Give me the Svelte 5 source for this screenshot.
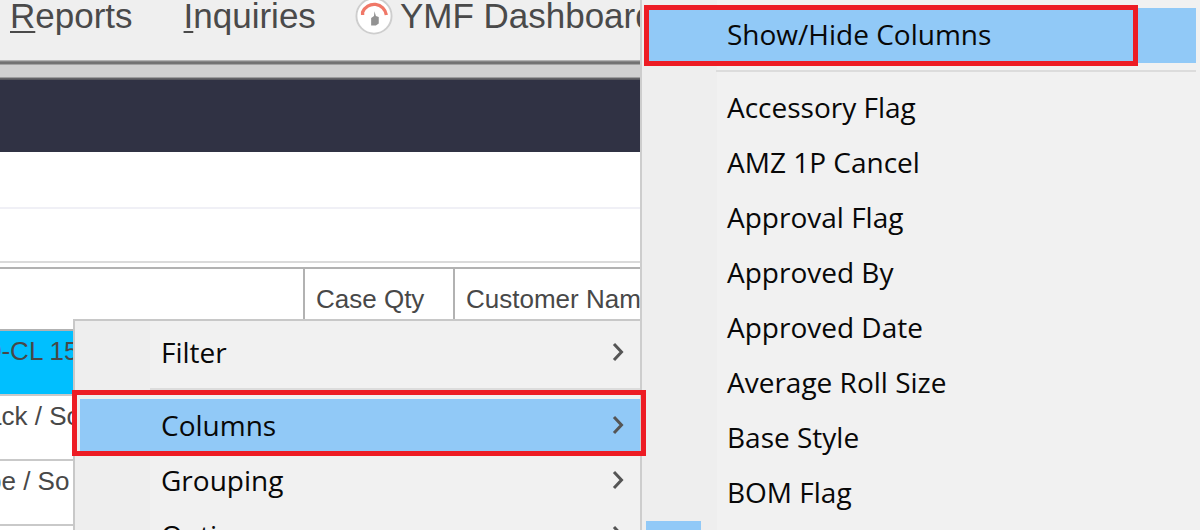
<script>
  const columns = ['Accessory Flag', 'AMZ 1P Cancel', 'Approval Flag', 'Approved By', 'Approved Date', 'Average Roll Size', 'Base Style', 'BOM Flag'];
  const rows = ['0-CL 15', 'ack / So', 'pe / So'];
</script>

{#snippet arrow()}
  <svg class="arrow" viewBox="0 0 12 20" aria-hidden="true"><path d="M2 2 L9.500 10 L2 18" /></svg>
{/snippet}

<div class="screen">
  <main class="pane">
    <div class="app">
      <nav class="toolbar">
        <button><u>R</u>eports</button>
        <button><u>I</u>nquiries</button>
        <button class="dash">
          <svg class="gauge" viewBox="0 0 40 40" aria-hidden="true">
            <circle cx="20" cy="20" r="18.500" fill="#fff" stroke="#cecece" stroke-width="2" />
            <path d="M8 19 V16 A13 13 0 0 1 33 19" fill="none" stroke="#f07868" stroke-width="3.500" />
            <path d="M20.500 15 L22 20 L25 21 V28 L22 30 H17 V22 L20 20 Z" fill="#929292" />
          </svg>
          YMF Dashboard
        </button>
      </nav>
      <div class="divider"></div>
      <div class="banner"></div>
      <div class="strip"></div>
      <div class="strip second"></div>
      <table>
        <thead>
          <tr><th class="item"></th><th class="qty">Case Qty</th><th>Customer Nam</th></tr>
        </thead>
        <tbody>
          {#each rows as row, i}
            <tr class:selected={i === 0}><td><span>{row}</span></td><td></td><td></td></tr>
          {/each}
        </tbody>
      </table>
    </div>

    <div class="menu context">
      <button class="entry">Filter {@render arrow()}</button>
      <hr />
      <button class="entry active marked">Columns {@render arrow()}</button>
      <button class="entry">Grouping {@render arrow()}</button>
      <button class="entry">Options {@render arrow()}</button>
    </div>
  </main>

  <aside class="menu submenu">
    <button class="entry active marked">Show/Hide Columns</button>
    <hr />
    {#each columns as column}
      <button class="entry">{column}</button>
    {/each}
    <div class="check"></div>
  </aside>
</div>

<style>
  :global(body) { margin: 0; }
  .screen {
    display: grid;
    grid-template-columns: 8fr 7fr;
    height: 100vh;
    overflow: hidden;
    font-family: "Liberation Sans", Arial, sans-serif;
    background: #fff;
  }
  button {
    border: 0;
    margin: 0;
    padding: 0;
    background: none;
    font: inherit;
    color: inherit;
    white-space: nowrap;
  }
  .pane { position: relative; z-index: 1; min-width: 0; }
  .app { overflow: hidden; height: 100vh; }

  .toolbar {
    display: flex;
    gap: 51px;
    height: 60px;
    padding-left: 10px;
    background: #efefef;
    color: #4a4a4a;
    font-size: 35px;
    line-height: 32px;
  }
  .toolbar button { height: 32px; }
  .toolbar u { text-decoration-thickness: 2px; text-underline-offset: 3px; }
  .toolbar .dash { display: flex; gap: 7px; margin-left: -12px; }
  .gauge { width: 38px; height: 38px; margin-top: -3px; }
  .divider {
    height: 20px;
    background: linear-gradient(#c8c8c8 0, #707070 2px, #747474 4px, #d0d0d0 5px, #d0d0d0 17px, #6a6a6c 18px, #505058 20px);
  }
  .banner { height: 72px; background: #303244; }
  .strip { height: 55px; border-bottom: 2px solid #f0f0f6; }
  .strip.second { height: 52px; border-bottom-color: #dadada; }

  table {
    width: 100%;
    margin-top: 4px;
    table-layout: fixed;
    border-collapse: collapse;
    color: #484848;
    font-size: 26px;
  }
  th {
    height: 60px;
    padding: 0 0 0 11px;
    border: 2px solid #b2b2b2;
    border-width: 2px 0 2px 2px;
    font-weight: 400;
    text-align: left;
    white-space: nowrap;
  }
  th.item { width: 292px; border-left: 0; }
  th.qty { width: 137px; }
  td {
    height: 63px;
    padding: 0;
    border-bottom: 2px solid #c9c9c9;
    vertical-align: top;
    line-height: 40px;
    white-space: nowrap;
  }
  td span { margin-left: -13px; }
  .selected { background: #00bfff; }

  .menu {
    display: flex;
    flex-direction: column;
    box-sizing: border-box;
    color: #080808;
    font-family: "Open Sans", "Noto Sans", sans-serif;
    font-size: 28px;
    background: linear-gradient(90deg, #eee 0 75px, #f1f1f1 75px);
  }
  .context {
    position: absolute;
    top: 319px;
    left: 73px;
    right: 0;
    padding: 5px 0 0 5px;
    border-top: 2px solid #c8c8c8;
    border-left: 2px solid #c8c8c8;
  }
  .submenu {
    padding: 8px 4px 0 4px;
    border-left: 2px solid #cdcdcd;
    z-index: 0;
  }
  .entry {
    display: flex;
    flex: none;
    position: relative;
    align-items: center;
    justify-content: space-between;
    height: 55px;
    padding: 0 16px 4px 81px;
    text-align: left;
  }
  .active { background: #91c9f7; }
  hr {
    flex: none;
    box-sizing: border-box;
    width: calc(100% - 70px);
    height: 18px;
    margin: 0 0 0 70px;
    padding: 7px 0 9px;
    border: 0;
    background: #dcdcdc content-box;
  }
  .marked::after {
    content: "";
    position: absolute;
    inset: -9px -6px -2px -8px;
    border: 5px solid #ed1c24;
  }
  .submenu .marked::after { inset: -3px 58px -3px -2px; }
  .arrow {
    width: 12px;
    height: 20px;
    fill: none;
    stroke: #555;
    stroke-width: 3;
  }
  .check { flex: none; width: 55px; height: 55px; background: #91c9f7; }
</style>
